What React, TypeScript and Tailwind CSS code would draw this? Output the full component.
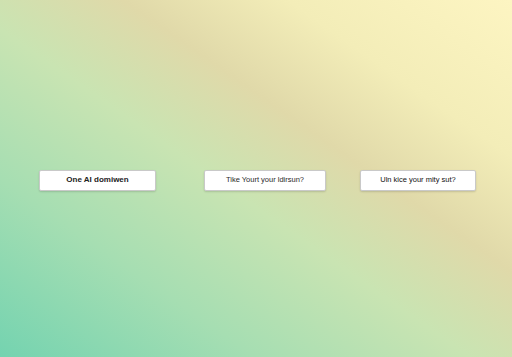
import React from "react";

export default function App() {
  return (
    <div className="w-[512px] h-[357px] overflow-hidden bg-[linear-gradient(to_top_right,#74d3b0_0%,#a6deb2_25%,#c9e4b2_46%,#e0d9a9_62%,#f3edb8_78%,#fdf5c2_100%)] flex flex-col justify-center font-['Liberation_Sans',Arial,sans-serif]">
      <div className="flex items-center pl-[39px] pt-[3px]">
        <button className="w-[117px] h-[21px] bg-white border border-[#c9c9c9] rounded-[2px] shadow-[0_1px_2px_rgba(0,0,0,0.15)] text-[8px] font-bold text-[#222]">
          One AI domiwen
        </button>
        <button className="ml-[48px] w-[122px] h-[21px] bg-white border border-[#c9c9c9] rounded-[2px] shadow-[0_1px_2px_rgba(0,0,0,0.15)] text-[7.5px] text-[#2a2a2a]">
          Tike Yourt your ldirsun?
        </button>
        <button className="ml-[34px] w-[116px] h-[21px] bg-white border border-[#c9c9c9] rounded-[2px] shadow-[0_1px_2px_rgba(0,0,0,0.15)] text-[7.5px] text-[#111]">
          Uln kice your mity sut?
        </button>
      </div>
    </div>
  );
}
